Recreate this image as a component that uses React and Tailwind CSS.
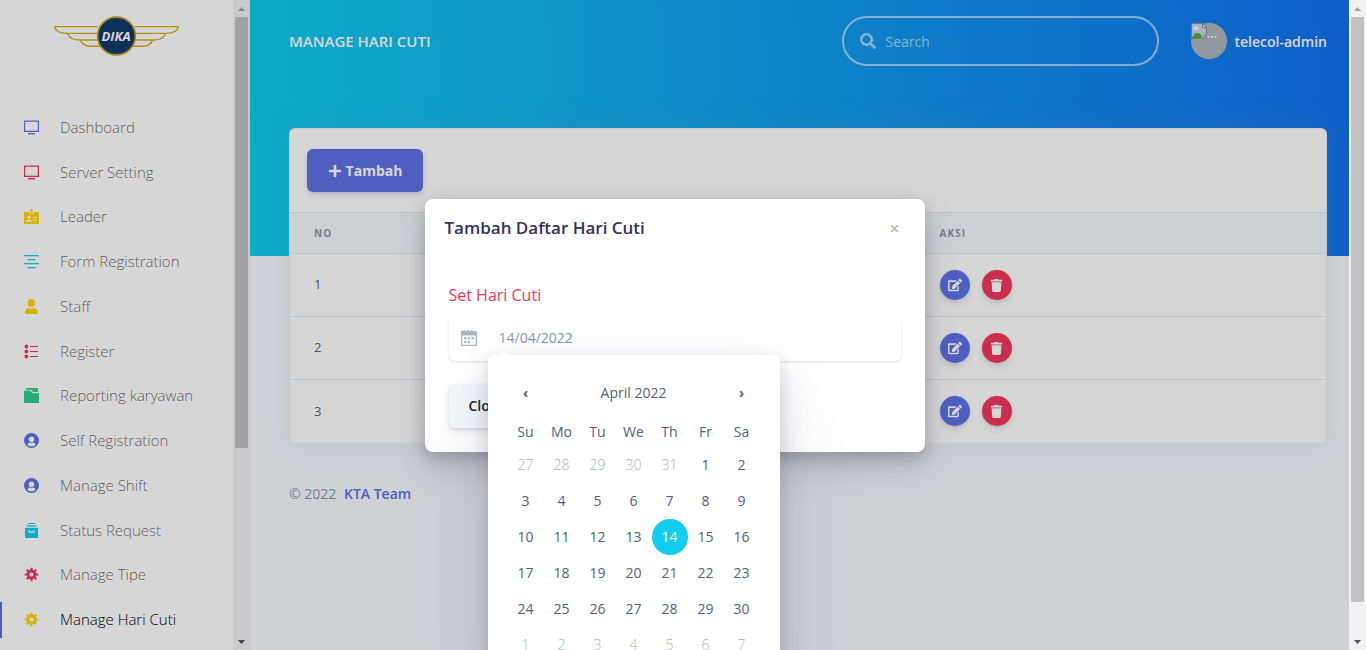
import React from "react";
import { FaSearch, FaPlus, FaEdit, FaTrash } from "react-icons/fa";

const icons = {
  tv: (
    <g>
      <path fill="none" stroke="currentColor" strokeWidth="1.2" d="M.6 1.1h13.8v10.2H.6z" />
      <path fill="currentColor" d="M4 13h7v1.400H4z" />
    </g>
  ),
  badge: (
    <path
      fill="currentColor"
      fillRule="evenodd"
      d="M6.5 0h2v3.5h-2zM0 3h5.2v1.6h4.6V3H15v12H0zM4.9 6.7a1.5 1.5 0 1 0 0 3 1.5 1.5 0 0 0 0-3zM2.3 12.6h5.2c0-1.400-1-2.200-2.600-2.200s-2.600.8-2.600 2.200zM9 8v1h4V8zM9 10.500v1h3v-1z"
    />
  ),
  align: (
    <g fill="currentColor">
      <path d="M0 1h15v1.300H0zM3.500 5h8v1.300h-8zM0 9h15v1.300H0zM3.500 13h8v1.300h-8z" />
    </g>
  ),
  person: (
    <g fill="currentColor">
      <ellipse cx="7.300" cy="4" rx="3.600" ry="4" />
      <path d="M1 13.500C1 10.500 2.800 9 4.600 9c1.700 1 3.700 1 5.400 0 1.800 0 3.700 1.500 3.700 4.500 0 1-.6 1.500-1.500 1.500H2.500C1.600 15 1 14.500 1 13.500z" />
    </g>
  ),
  list: (
    <g>
      <circle cx="2.400" cy="2.500" r="1.900" fill="currentColor" />
      <circle cx="2.400" cy="7.500" r="1.900" fill="currentColor" />
      <circle cx="2.400" cy="12.500" r="1.900" fill="currentColor" />
      <path stroke="currentColor" strokeWidth="1.2" d="M6 2.500h8M6 7.500h8M6 12.500h8" />
    </g>
  ),
  folder: (
    <g fill="currentColor">
      <path d="M2 0h12v4H9L7 1.800H2z" />
      <path d="M0 2.500h6l2.700 2.700H15V15H0z" />
    </g>
  ),
  user: (
    <path
      fill="currentColor"
      fillRule="evenodd"
      d="M7.500 0a7.500 7.500 0 1 0 0 15 7.500 7.500 0 0 0 0-15zM7.500 3.500c1.700 0 2.800 1.200 2.800 2.800S9.200 9.300 7.500 9.300 4.700 7.900 4.700 6.300 5.800 3.500 7.500 3.500zM3.500 12c.4-1.600 1.300-2.300 2.300-2.400 1.100.6 2.300.6 3.400 0 1 .1 1.900.8 2.300 2.400-2 1.800-6 1.800-8 0z"
    />
  ),
  archive: (
    <path
      fill="currentColor"
      fillRule="evenodd"
      d="M4 0h7v1H4zM2.500 2.200h10v1.200h-10zM1 4.800h13V15H1zM4.500 7v2.800h6V7H9.300v1.500H5.700V7z"
    />
  ),
  gear: (
    <g>
      <circle cx="7.500" cy="7.500" r="3.500" fill="none" stroke="currentColor" strokeWidth="2.800" />
      <path
        stroke="currentColor"
        strokeWidth="2"
        d="M7.500.7v3M7.500 11.300v3M.7 7.500h3M11.300 7.500h3M2.700 2.700l2 2M10.300 10.300l2 2M2.700 12.300l2-2M10.300 4.700l2-2"
      />
    </g>
  ),
};

const menu = [
  { label: "Dashboard", icon: "tv", color: "text-[#5e72e4]" },
  { label: "Server Setting", icon: "tv", color: "text-[#f5365c]" },
  { label: "Leader", icon: "badge", color: "text-[#ffd600]" },
  { label: "Form Registration", icon: "align", color: "text-[#11cdef]" },
  { label: "Staff", icon: "person", color: "text-[#ffd600]" },
  { label: "Register", icon: "list", color: "text-[#f5365c]" },
  { label: "Reporting karyawan", icon: "folder", color: "text-[#2dce89]" },
  { label: "Self Registration", icon: "user", color: "text-[#5e72e4]" },
  { label: "Manage Shift", icon: "user", color: "text-[#5e72e4]" },
  { label: "Status Request", icon: "archive", color: "text-[#11cdef]" },
  { label: "Manage Tipe", icon: "gear", color: "text-[#f5365c]" },
  { label: "Manage Hari Cuti", icon: "gear", color: "text-[#ffd600]", active: true },
];

const weekDays = ["Su", "Mo", "Tu", "We", "Th", "Fr", "Sa"];

const days = Array.from({ length: 42 }, (_, i) => {
  if (i < 5) return { n: 27 + i, muted: true };
  if (i < 35) return { n: i - 4, muted: false };
  return { n: i - 34, muted: true };
});
const weeks = [0, 1, 2, 3, 4, 5].map((w) => days.slice(w * 7, w * 7 + 7));

function Scrollbar({ thumb }) {
  return (
    <div aria-hidden="true" className="flex w-[17px] shrink-0 flex-col bg-[#f1f1f1]">
      <div className="flex h-[17px] items-center justify-center">
        <svg width="7" height="4" className="text-[#a3a3a3]">
          <path fill="currentColor" d="M3.500 0L7 4H0z" />
        </svg>
      </div>
      <div className="flex-1 px-0.5">
        <div className={`w-[13px] bg-[#c1c1c1] ${thumb}`} />
      </div>
      <div className="flex h-[17px] items-center justify-center">
        <svg width="7" height="4" className="text-[#505050]">
          <path fill="currentColor" d="M0 0h7L3.500 4z" />
        </svg>
      </div>
    </div>
  );
}

function Logo() {
  return (
    <svg width="125" height="40" viewBox="0 0 125 40" role="img" aria-label="DIKA">
      <g fill="none" stroke="#d6b01c" strokeWidth="1.400">
        <path d="M44 10.600H.8c.5 4 4.500 6.500 12 6.800h31M13.500 17.400c1.200 4 5 6.500 12 6.600h18.500M26.500 24c1 4 4 6 10 6.200H46" />
        <path d="M81 10.600h43.200c-.5 4-4.500 6.500-12 6.800h-31M111.500 17.400c-1.200 4-5 6.500-12 6.600H81M98.500 24c-1 4-4 6-10 6.200H79" />
      </g>
      <circle cx="62.500" cy="20" r="18.900" fill="#133a6b" stroke="#c8a41c" strokeWidth="1.600" />
      <text
        x="62"
        y="25"
        textAnchor="middle"
        fill="#ffffff"
        fontFamily="Open Sans, sans-serif"
        fontSize="13"
        fontWeight="700"
        fontStyle="italic"
      >
        DIKA
      </text>
    </svg>
  );
}

function Sidebar() {
  return (
    <aside className="flex w-[250px] shrink-0 bg-white">
      <div className="min-w-0 flex-1 overflow-hidden">
        <div className="flex h-[105px] justify-center pt-4">
          <Logo />
        </div>
        <nav className="grid h-[537px] grid-rows-12">
          {menu.map((m) => (
            <a key={m.label} href="#" className="flex items-center">
              <span className={`h-9 w-0.5 ${m.active ? "bg-[#5e72e4]" : ""}`} />
              <svg width="15" height="15" viewBox="0 0 15 15" className={`ml-[22px] ${m.color}`}>
                {icons[m.icon]}
              </svg>
              <span
                className={`ml-[21px] pb-px text-[15px] leading-5 font-light ${
                  m.active ? "text-black" : "text-black/60"
                }`}
              >
                {m.label}
              </span>
            </a>
          ))}
        </nav>
      </div>
      <Scrollbar thumb="h-[70%]" />
    </aside>
  );
}

function Avatar() {
  return (
    <span className="flex h-9 w-9 rounded-full bg-[#adb5bd]">
      <svg width="16" height="16" viewBox="0 0 16 16" className="shrink-0" aria-hidden="true">
        <path d="M.5.500h11l4 4v11H.5z" fill="#c5d5f4" stroke="#8a8a8a" />
        <path d="M11.500.500v4h4z" fill="#fff" stroke="#8a8a8a" />
        <path d="M3 5.500c0-2 3-2.500 3.500-.8 1.500-.2 2 1.800.5 1.800H4C3.400 6.500 3 6 3 5.500z" fill="#fff" />
        <path d="M1 15c1-3 3-5 5.500-5s4 2.500 5 5z" fill="#58a832" />
        <path d="M9 15.500l6.500-6v6z" fill="#adb5bd" />
      </svg>
      <span className="text-[14px] leading-5 font-normal text-white">...</span>
    </span>
  );
}

function TopBar() {
  return (
    <header className="flex h-64 items-start bg-[linear-gradient(87deg,#11cdef_0%,#1171ef_100%)] pt-4 pr-[22px] pl-[39px]">
      <div className="flex h-[50px] flex-1 items-center">
        <h1 className="flex-1 text-[15px] font-semibold text-white">MANAGE HARI CUTI</h1>
        <label className="mr-8 flex h-[50px] w-[317px] items-center rounded-full border-2 border-white/60 pl-4 text-white/60">
          <FaSearch size={16} />
          <input
            type="search"
            aria-label="Search"
            placeholder="Search"
            className="ml-2.5 min-w-0 flex-1 bg-transparent text-[14px] outline-none placeholder:text-white/60"
          />
        </label>
        <a href="#" className="flex items-center gap-2 text-[14px] font-semibold text-white">
          <Avatar />
          telecol-admin
        </a>
      </div>
    </header>
  );
}

const roundButton =
  "flex h-[30px] w-[30px] items-center justify-center rounded-full text-white shadow-[0_4px_6px_rgba(50,50,93,0.11),0_1px_3px_rgba(0,0,0,0.08)]";

function HolidayCard() {
  return (
    <section className="overflow-hidden rounded-md border border-black/5 bg-white shadow-[0_0_32px_rgba(136,152,170,0.15)]">
      <div className="px-[17px] py-5">
        <button className="flex h-[43px] w-[116px] items-center justify-center gap-1 rounded-md bg-[#5e72e4] text-[14px] font-bold text-white shadow-[0_4px_6px_rgba(50,50,93,0.11),0_1px_3px_rgba(0,0,0,0.08)]">
          <FaPlus size={14} />
          Tambah
        </button>
      </div>
      <table className="w-full table-fixed text-left text-[13px] text-[#525f7f]">
        <thead>
          <tr className="h-[41px] border-y border-[#e3e7ec] bg-[#f6f9fc] text-[10px] tracking-[1px] text-[#8898aa]">
            <th className="w-[35%] px-6 font-bold">NO</th>
            <th className="w-[25%]" />
            <th className="px-7 font-bold">AKSI</th>
          </tr>
        </thead>
        <tbody>
          {[1, 2, 3].map((n) => (
            <tr key={n} className="h-[63px] border-t border-[#e3e7ec]">
              <td className="px-6">{n}</td>
              <td />
              <td className="px-7">
                <div className="flex gap-3">
                  <button aria-label="Edit" className={`${roundButton} bg-[#5e72e4]`}>
                    <FaEdit size={14} />
                  </button>
                  <button aria-label="Delete" className={`${roundButton} bg-[#f5365c]`}>
                    <FaTrash size={13} />
                  </button>
                </div>
              </td>
            </tr>
          ))}
        </tbody>
      </table>
    </section>
  );
}

function CalendarIcon() {
  return (
    <svg width="16" height="16" viewBox="0 0 16 16" fill="currentColor" className="shrink-0 text-[#adb5bd]">
      <path
        fillRule="evenodd"
        d="M0 1h2.500V0h1.300v1h2.700V0h1.300v1h2.400V0h1.300v1H16v15H0zM1.300 5.500v9.200h13.400V5.500z"
      />
      <path d="M3 7.300h2.400v2H3zM6.600 7.300H9v2H6.600zM10.500 7.300H13v2h-2.500zM3 11h2.400v2H3zM6.600 11H9v2H6.600z" />
    </svg>
  );
}

function DatePicker() {
  return (
    <div className="absolute top-10 left-[39px] rounded-md bg-white p-5 text-[14px] text-[#525f7f] shadow-[0_50px_100px_rgba(50,50,93,0.1),0_15px_35px_rgba(50,50,93,0.15),0_5px_15px_rgba(0,0,0,0.1)]">
      <svg width="10" height="5" className="absolute -top-[5px] left-[11px] text-white">
        <path fill="currentColor" d="M5 0l5 5H0z" />
      </svg>
      <div className="flex h-9 items-center">
        <button aria-label="Previous month" className="h-9 w-9 font-bold">
          ‹
        </button>
        <span className="flex-1 text-center">April 2022</span>
        <button aria-label="Next month" className="h-9 w-9 font-bold">
          ›
        </button>
      </div>
      <table className="table-fixed text-center">
        <thead>
          <tr>
            {weekDays.map((d) => (
              <th key={d} className="h-9 w-9 p-0 pt-1.5 font-normal">
                {d}
              </th>
            ))}
          </tr>
        </thead>
        <tbody>
          {weeks.map((week, w) => (
            <tr key={w}>
              {week.map((d) => (
                <td key={d.n} className="h-9 w-9 p-0">
                  <button
                    className={`block h-9 w-9 rounded-full ${
                      d.muted
                        ? "font-light text-[#adb5bd]"
                        : d.n === 14
                          ? "bg-[#11cdef] text-white"
                          : "text-[#525f7f]"
                    }`}
                  >
                    {d.n}
                  </button>
                </td>
              ))}
            </tr>
          ))}
        </tbody>
      </table>
    </div>
  );
}

function HolidayModal() {
  return (
    <div
      role="dialog"
      aria-labelledby="modal-title"
      className="w-[500px] rounded-lg bg-white shadow-[0_15px_35px_rgba(50,50,93,0.2),0_5px_15px_rgba(0,0,0,0.17)]"
    >
      <div className="flex h-[58px] items-center justify-between px-5">
        <h2 id="modal-title" className="text-[17px] font-semibold text-[#32325d]">
          Tambah Daftar Hari Cuti
        </h2>
        <button aria-label="Close dialog" className="w-5 text-[18px] leading-5 font-semibold text-black/30">
          ×
        </button>
      </div>
      <form className="p-6">
        <label htmlFor="holiday" className="mb-1.5 block text-[16px] leading-7 text-[#f5365c]">
          Set Hari Cuti
        </label>
        <div className="relative mb-[23px]">
          <div className="flex h-[46px] items-center rounded-md bg-white pl-3 shadow-[0_1px_3px_rgba(50,50,93,0.15),0_1px_0_rgba(0,0,0,0.02)]">
            <CalendarIcon />
            <input
              id="holiday"
              type="text"
              defaultValue="14/04/2022"
              className="ml-[22px] min-w-0 flex-1 bg-transparent text-[14px] text-[#8898aa] outline-none"
            />
          </div>
          <DatePicker />
        </div>
        <button
          type="button"
          className="h-11 rounded-md bg-[#f4f8fb] px-5 text-[14px] font-semibold text-[#212529] shadow-[0_4px_6px_rgba(50,50,93,0.11),0_1px_3px_rgba(0,0,0,0.08)]"
        >
          Close
        </button>
      </form>
    </div>
  );
}

export default function App() {
  return (
    <div className="flex h-screen overflow-hidden bg-[#f8f9fe] font-['Open_Sans',sans-serif]">
      <div className="relative flex min-w-0 flex-1 overflow-hidden">
        <Sidebar />
        <main className="min-w-0 flex-1">
          <TopBar />
          <div className="-mt-32 pr-[22px] pl-[39px]">
            <HolidayCard />
            <footer className="mt-[38px] text-[14px] leading-6 text-[#8898aa]">
              © 2022{" "}
              <a href="#" className="ml-1 font-semibold text-[#5e72e4]">
                KTA Team
              </a>
            </footer>
          </div>
        </main>
        <div className="absolute inset-0 flex items-center justify-center bg-black/16">
          <HolidayModal />
        </div>
      </div>
      <Scrollbar thumb="h-[95%]" />
    </div>
  );
}
